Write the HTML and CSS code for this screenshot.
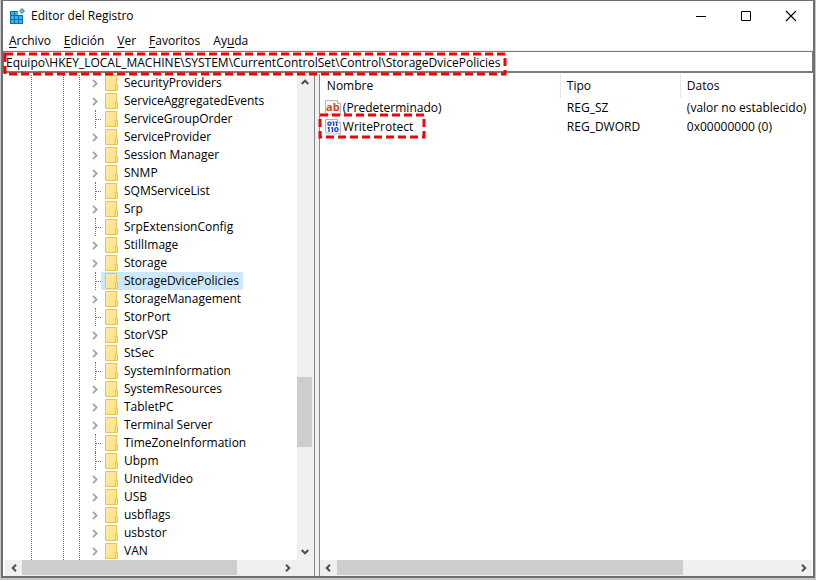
FILE: index.html
```html
<!DOCTYPE html>
<html lang="es">
<head>
<meta charset="utf-8">
<title>Editor del Registro</title>
<link rel="stylesheet" href="styles.css">
</head>
<body>
<svg width="0" height="0" class="defs" aria-hidden="true">
  <defs>
    <linearGradient id="paper" x1="0" y1="0" x2="1" y2="1"><stop offset="0" stop-color="#ffeba6"/><stop offset="1" stop-color="#ffe07f"/></linearGradient>
    <symbol id="folder" viewBox="0 0 14 16"><path d="M.5.5h11v15H.5z" fill="url(#paper)" stroke="#e9c350"/><path d="M11.5 0v9.5h-1v6h2v-6h-1" fill="#ffe694" stroke="#e9c350"/></symbol>
    <symbol id="chevron" viewBox="0 0 6 9"><path d="M1 .8l3.700 3.700L1 8.200" fill="none" stroke="#a6a6a6" stroke-width="1.900"/></symbol>
    <symbol id="arrow" viewBox="0 0 8 8"><path d="M2 .7L5.300 4 2 7.300" fill="none" stroke="#505050" stroke-width="2"/></symbol>
  </defs>
</svg>
<main class="window">
  <header class="titlebar">
    <svg class="app-icon" width="17" height="17" viewBox="0 0 17 17" aria-hidden="true"><path d="M1 3h8v4h5v9H1z" fill="#0b6fa8"/><path d="M2 4h3v3H2zM6 4h3v3H6zM2 8h3v3H2zM6 8h3v3H6zM10 8h3v3h-3zM2 12h3v3H2zM6 12h3v3H6zM10 12h3v3h-3z" fill="#37b5ea"/><path d="M13 .6l2.400 2.400L13 5.400 10.600 3z" fill="#6ed0f5" stroke="#0b6fa8"/></svg>
    <h1>Editor del Registro</h1>
    <div class="controls">
      <button aria-label="Minimizar"><svg width="12" height="12" viewBox="0 0 12 12"><path d="M1 6.500h10" stroke="#000"/></svg></button>
      <button aria-label="Maximizar"><svg width="12" height="12" viewBox="0 0 12 12"><path d="M1.500 1.500h9v9h-9z" fill="none" stroke="#000"/></svg></button>
      <button aria-label="Cerrar"><svg width="12" height="12" viewBox="0 0 12 12"><path d="M1 1l10 10M11 1L1 11" stroke="#000" stroke-width="1.100"/></svg></button>
    </div>
  </header>
  <nav class="menu">
    <button><u>A</u>rchivo</button><button><u>E</u>dición</button><button><u>V</u>er</button><button><u>F</u>avoritos</button><button>Ay<u>u</u>da</button>
  </nav>
  <div class="address">
    <input aria-label="Ruta" value="Equipo\HKEY_LOCAL_MACHINE\SYSTEM\CurrentControlSet\Control\StorageDvicePolicies">
    <svg class="mark" width="504" height="24" aria-hidden="true"><rect x="2" y="2" width="500" height="20"/></svg>
  </div>
  <div class="panes">
    <section class="tree-pane">
      <ul class="tree" id="tree"></ul>
      <div class="vbar"><button aria-label="Subir"><svg width="8" height="8" class="up"><use href="#arrow"/></svg></button><div class="track"><div class="thumb"></div></div><button aria-label="Bajar"><svg width="8" height="8" class="down"><use href="#arrow"/></svg></button></div>
      <div class="hbar"><button aria-label="Izquierda"><svg width="8" height="8" class="left"><use href="#arrow"/></svg></button><div class="track"><div class="thumb"></div></div><button aria-label="Derecha"><svg width="8" height="8"><use href="#arrow"/></svg></button></div>
      <div class="corner"></div>
    </section>
    <div class="splitter"></div>
    <section class="value-pane">
      <table>
        <colgroup><col class="c-name"><col class="c-type"><col></colgroup>
        <thead><tr><th>Nombre</th><th>Tipo</th><th>Datos</th></tr></thead>
        <tbody>
          <tr><td><span class="name"><svg width="16" height="16" viewBox="0 0 16 16" aria-hidden="true"><path d="M.5.5h12l3 3v12l-3-1-3 1-2-2-3 1-4-1z" fill="#f6f6f6" stroke="#b5b5b5"/><path d="M12.500.5v3h3" fill="#fff" stroke="#b5b5b5"/><text x="1" y="11" class="glyph" fill="#d0492a">ab</text></svg>(Predeterminado)</span></td><td>REG_SZ</td><td>(valor no establecido)</td></tr>
          <tr><td><span class="name"><svg width="16" height="16" viewBox="0 0 16 16" aria-hidden="true"><path d="M.5.5h12l3 3v12l-3-1-3 1-2-2-3 1-4-1z" fill="#f6f6f6" stroke="#b5b5b5"/><path d="M12.500.5v3h3" fill="#fff" stroke="#b5b5b5"/><g fill="none" stroke="#2746c8" stroke-width="1.400"><ellipse cx="4.500" cy="4.700" rx="1.600" ry="1.600"/><ellipse cx="11.500" cy="10.500" rx="1.600" ry="1.900"/><path d="M8.700 2.500v4.500M11.700 2.500v4.500M7.500 3.200h1M10.500 3.200h1M4 8v5M7.500 8v5M2.800 8.700H4M6.300 8.700h1"/></g></svg>WriteProtect</span><svg class="mark" width="108" height="26" aria-hidden="true"><rect x="2" y="2" width="104" height="22"/></svg></td><td>REG_DWORD</td><td>0x00000000 (0)</td></tr>
        </tbody>
      </table>
      <div class="hbar"><button aria-label="Izquierda"><svg width="8" height="8" class="left"><use href="#arrow"/></svg></button><div class="track"><div class="thumb"></div></div><button aria-label="Derecha"><svg width="8" height="8"><use href="#arrow"/></svg></button></div>
    </section>
  </div>
</main>
<script src="tree.js"></script>
</body>
</html>
```
FILE: styles.css
```css
* { box-sizing: border-box; }
body { margin: 0; padding: 0 1px 2px; height: 100vh; background: #c8c8c8; font: 12px/18px "Open Sans", "Noto Sans", sans-serif; color: #000; }
button { border: 0; padding: 0; background: none; font: inherit; color: inherit; display: grid; place-items: center; }
.defs { position: absolute; }
.window { height: 100%; display: flex; flex-direction: column; background: #fff; border: 2px solid #6e6f74; border-top-width: 1px; }
.titlebar { display: flex; align-items: center; height: 30px; padding-left: 6px; }
.titlebar h1 { flex: 1; margin: 0 0 0 5px; font: inherit; }
.controls { display: flex; }
.controls button { width: 45px; height: 28px; }
.menu { display: flex; gap: 13px; height: 20px; padding-left: 6px; border-bottom: 1px solid #f0f0f0; }
.menu button { display: block; }
.menu u { text-underline-offset: 2px; }
.address { position: relative; height: 22px; border: 1px solid #7a7a7a; border-bottom-width: 2px; }
.address input { display: block; width: 100%; height: 19px; border: 0; padding: 1px 2px 0; font: inherit; outline: 0; }
.mark { position: absolute; pointer-events: none; }
.mark rect { fill: none; stroke: #f80000; stroke-width: 3; stroke-dasharray: 8 4; }
.address .mark { left: -1px; top: 0; }
.panes { flex: 1; min-height: 0; display: flex; padding-top: 1px; }
.tree-pane { width: 38.500%; display: grid; grid-template: minmax(0, 1fr) 16px / minmax(0, 1fr) 17px; padding-left: 2px; border-right: 1px solid #828790; }
.tree { list-style: none; margin: 0; padding: 0; overflow: hidden; background: repeating-linear-gradient(#fff 0 1px, transparent 1px 2px), linear-gradient(#666, #666) 26px 0 / 1px 100% no-repeat, linear-gradient(#666, #666) 58px 0 / 1px 100% no-repeat, linear-gradient(#666, #666) 74px 0 / 1px 100% no-repeat; }
.tree li { display: flex; height: 18px; padding-left: 87px; }
.branch { width: 9px; display: flex; align-items: center; flex: none; padding-top: 1px; }
.branch.leaf { margin-left: 3px; width: 6px; border-left: 1px dotted #777; }
.leaf::after { content: ""; width: 5px; border-top: 1px dotted #777; }
.label { display: flex; align-items: center; padding: 0 4px; }
.label svg { margin-right: 5px; }
.selected .label { background: #cce8ff; }
.vbar, .hbar { display: flex; background: #f0f0f0; }
.vbar { flex-direction: column; }
.vbar button, .hbar button { flex: none; width: 17px; height: 16px; }
.track { flex: 1; display: flex; }
.vbar .track { flex-direction: column; }
.vbar .thumb { width: 15px; height: 15.500%; margin-top: 287px; background: #cdcdcd; }
.hbar .thumb { height: 15px; width: 83.500%; background: #cdcdcd; }
.corner { background: #f0f0f0; }
.up { transform: rotate(-90deg); }
.down { transform: rotate(90deg); }
.left { transform: rotate(180deg); }
.splitter { width: 5px; background: #f0f0f0; border-right: 1px solid #828790; }
.value-pane { flex: 1; min-width: 0; display: flex; flex-direction: column; justify-content: space-between; padding-right: 1px; }
.value-pane .thumb { width: 75.500%; }
table { width: 100%; table-layout: fixed; border-collapse: separate; border-spacing: 0; }
.c-name { width: 241px; }
.c-type { width: 120px; }
th { height: 24px; padding: 0 6px; border-right: 1px solid #e5e5e5; font-weight: 400; text-align: left; }
th:first-child { padding-left: 7px; }
th:last-child { border: 0; }
td { position: relative; height: 19px; padding: 0 6px; white-space: nowrap; }
td:first-child { padding-left: 5px; }
.name { display: flex; align-items: center; gap: 2px; }
.glyph { font: 700 11px "Open Sans", sans-serif; }
td .mark { left: -2px; top: -4px; }
```
FILE: tree.js
```js
const leaves = ["ServiceGroupOrder", "SQMServiceList", "SrpExtensionConfig", "StorageDvicePolicies", "StorPort", "SystemInformation", "TimeZoneInformation", "Ubpm"];
const keys = ["SecurityProviders", "ServiceAggregatedEvents", "ServiceGroupOrder", "ServiceProvider", "Session Manager", "SNMP", "SQMServiceList", "Srp", "SrpExtensionConfig", "StillImage", "Storage", "StorageDvicePolicies", "StorageManagement", "StorPort", "StorVSP", "StSec", "SystemInformation", "SystemResources", "TabletPC", "Terminal Server", "TimeZoneInformation", "Ubpm", "UnitedVideo", "USB", "usbflags", "usbstor", "VAN"];
document.getElementById("tree").innerHTML = keys.map(k => {
  const leaf = leaves.includes(k);
  return `<li class="${k === "StorageDvicePolicies" ? "selected" : ""}"><span class="branch ${leaf ? "leaf" : ""}">${leaf ? "" : '<svg width="6" height="9"><use href="#chevron"/></svg>'}</span><span class="label"><svg width="14" height="16"><use href="#folder"/></svg>${k}</span></li>`;
}).join("");
```
